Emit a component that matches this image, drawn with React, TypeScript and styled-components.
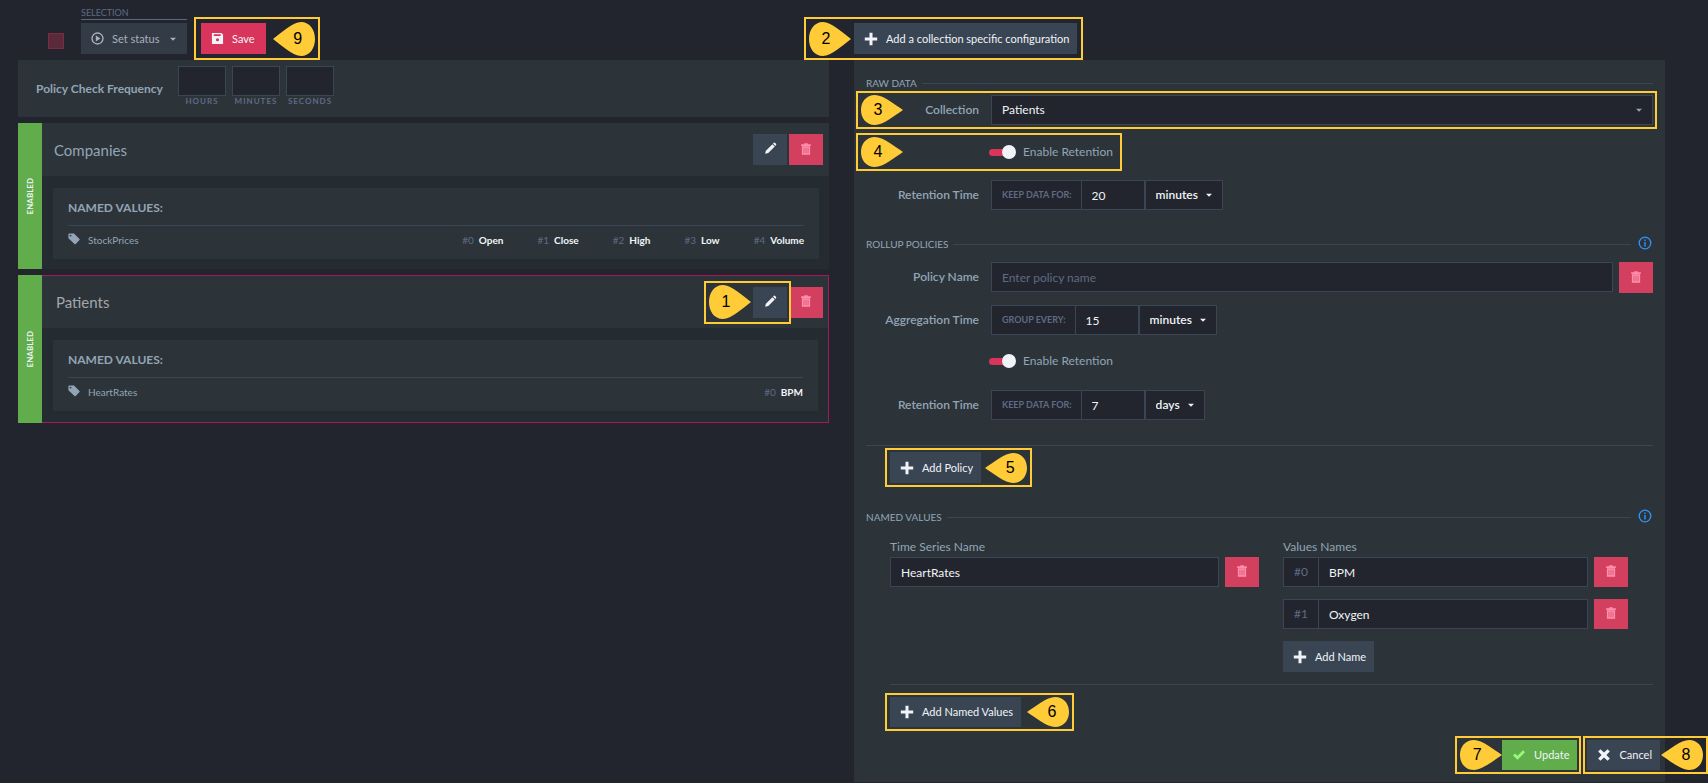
import React, { useId } from "react";
import styled, { createGlobalStyle, css } from "styled-components";

const c = {
  page: "#22252d",
  panel: "#2c343a",
  body: "#242b31",
  line: "#3a4653",
  button: "#3a4553",
  text: "#93a4b5",
  muted: "#5f6b84",
  white: "#f0f4f8",
  red: "#d9345b",
  redSoft: "#d3405f",
  green: "#61ad4b",
  accent: "#a5195a",
  yellow: "#ffcb37",
  info: "#2f93ff",
};

const GlobalStyle = createGlobalStyle`
  *, *::before, *::after { box-sizing: border-box; }
  body {
    margin: 0;
    background: ${c.page};
    color: ${c.text};
    font-family: Lato, "Liberation Sans", sans-serif;
    font-size: 12px;
    line-height: 16px;
    overflow-x: hidden;
  }
  button, input, select { font: inherit; margin: 0; border-radius: 0; }
`;

const Page = styled.main`
  display: grid;
  grid-template-columns: minmax(0, 1fr) minmax(0, 1fr);
  column-gap: 25px;
  padding: 0 43px 2px 18px;
`;

const Column = styled.section`
  display: flex;
  flex-direction: column;
`;

const Toolbar = styled.header`
  display: flex;
  align-items: flex-end;
  height: 60px;
  padding-bottom: 6px;
`;

const SelectionTools = styled(Toolbar)`
  padding-left: 30px;
`;

const Callout = styled.div<{ $wide?: boolean }>`
  position: relative;
  flex: ${(p) => (p.$wide ? "1" : "none")};
  display: flex;
  align-items: center;
`;

const Frame = styled.div<{ $gap: number; $left: number; $right: number }>`
  position: absolute;
  z-index: 2;
  top: ${(p) => -p.$gap}px;
  bottom: ${(p) => -p.$gap}px;
  left: ${(p) => -p.$left}px;
  right: ${(p) => -p.$right}px;
  border: 2px solid ${c.yellow};
  pointer-events: none;
`;

const MarkerBox = styled.div<{ $side: "left" | "right"; $tall: boolean }>`
  position: absolute;
  top: 50%;
  ${(p) => p.$side}: 3px;
  width: 42px;
  height: ${(p) => (p.$tall ? 34 : 30)}px;
  transform: translateY(-50%);
  display: grid;
  place-items: center;
  padding-${(p) => (p.$side === "left" ? "right" : "left")}: 8px;
  color: #000;
  font: 16px/20px "Liberation Sans", Arial, sans-serif;

  svg {
    position: absolute;
    inset: 0;
    width: 100%;
    height: 100%;
  }
  span { position: relative; }
`;

function Annotation(props: {
  n: number;
  side: "left" | "right";
  tall?: boolean;
  left: number;
  right: number;
}) {
  const { n, side, tall = false, left, right } = props;
  const shape =
    side === "left"
      ? "M42 17C34 11 22 0 14 0C5 0 0 8 0 17S5 34 14 34C22 34 34 23 42 17Z"
      : "M0 17C8 11 20 0 28 0C37 0 42 8 42 17S37 34 28 34C20 34 8 23 0 17Z";
  return (
    <Frame $gap={tall ? 6 : 4} $left={left} $right={right}>
      <MarkerBox $side={side} $tall={tall}>
        <svg viewBox="0 0 42 34" preserveAspectRatio="none" aria-hidden="true">
          <path d={shape} fill={c.yellow} />
        </svg>
        <span>{n}</span>
      </MarkerBox>
    </Frame>
  );
}

const SelectAll = styled.input`
  appearance: none;
  width: 16px;
  height: 16px;
  margin: 0 17px 5px 0;
  border: 1px solid #7c2b42;
  background: #592b3a;
`;

const StatusGroup = styled.div`
  width: 106px;
  margin-right: 14px;
`;

const GroupLabel = styled.div`
  margin-bottom: 3px;
  border-bottom: 1px solid #5b677c;
  color: ${c.muted};
  font-size: 9px;
  line-height: 12px;
`;

const tones = {
  plain: css`background: ${c.button}; color: ${c.white};`,
  dim: css`background: #333b47; color: #a9b0b9;`,
  save: css`background: ${c.red}; color: ${c.white};`,
  danger: css`background: ${c.redSoft}; color: #ff8fac;`,
  success: css`background: ${c.green}; color: ${c.white}; svg { color: #9af582; }`,
};

const Button = styled.button<{ $tone?: keyof typeof tones; $low?: boolean }>`
  display: inline-flex;
  align-items: center;
  height: ${(p) => (p.$low ? 30 : 31)}px;
  padding: 0 8px 0 10px;
  border: 0;
  font-size: 11px;
  white-space: nowrap;
  cursor: pointer;
  ${(p) => tones[p.$tone ?? "plain"]}

  > svg:first-child { margin-right: 8px; }
`;

const SaveButton = styled(Button)`
  padding-right: 11px;
`;

const StatusButton = styled(Button)`
  width: 100%;
  > svg:last-child { margin-left: auto; }
`;

const IconButton = styled(Button)`
  flex: none;
  width: 34px;
  padding: 0 0 2px;
  justify-content: center;
  > svg:first-child { margin-right: 0; }
`;

type IconName = "play" | "caret" | "save" | "pencil" | "trash" | "plus" | "tag" | "info" | "check" | "close";

const glyphs: Record<IconName, React.ReactNode> = {
  play: (
    <>
      <circle cx="7" cy="7" r="5.9" fill="none" stroke="currentColor" strokeWidth="1.5" />
      <path d="M5.2 3.8L10.2 7L5.2 10.2Z" />
    </>
  ),
  caret: <path d="M3.5 5.5H10.5L7 9Z" />,
  save: (
    <path
      fillRule="evenodd"
      d="M1 1H11.2L13 2.8V13H1ZM3 2.3V4.3H10.4V2.3ZM7 6.6A1.7 1.7 0 1 0 7 10A1.7 1.7 0 1 0 7 6.6Z"
    />
  ),
  pencil: <path d="M9.7 1.7L10.6.9Q11.3.3 12 1L12.9 1.9Q13.6 2.6 13 3.3L12.2 4.2ZM9.1 2.3L11.6 4.8L4.6 11.8L1.2 12.7L2 9.4Z" />,
  trash: (
    <path
      fillRule="evenodd"
      d="M5 .4H9V1.6H12.6V3.4H1.4V1.6H5ZM2.2 3.9H11.8V13.6H2.2ZM4.2 5.4V12H5V5.4ZM6.6 5.4V12H7.4V5.4ZM9 5.4V12H9.8V5.4Z"
    />
  ),
  plus: <path d="M5.5.8H8.5V5.5H13.2V8.5H8.5V13.2H5.5V8.5H.8V5.5H5.5Z" />,
  tag: (
    <path
      fillRule="evenodd"
      d="M.5 1.5Q.5.5 1.5.5H7L13.4 6.9Q14 7.5 13.4 8.3L9 12.9Q8.3 13.5 7.5 12.9L.5 6ZM3 2A1 1 0 1 0 3 4A1 1 0 1 0 3 2Z"
    />
  ),
  info: (
    <>
      <circle cx="7" cy="7" r="5.8" fill="none" stroke="currentColor" strokeWidth="1.3" />
      <path d="M6.3 3.6H7.7V5H6.3ZM6.3 6H7.7V10.4H6.3Z" />
    </>
  ),
  check: <path d="M1 7.6L3 5.4L5.5 7.8L11 2.2L13 4.2L5.5 11.8Z" />,
  close: <path d="M1.2 3.4L3.4 1.2L7 4.6L10.6 1.2L12.8 3.4L9.4 7L12.8 10.6L10.6 12.8L7 9.4L3.4 12.8L1.2 10.6L4.6 7Z" />,
};

function Icon({ name, size = 14 }: { name: IconName; size?: number }) {
  return (
    <svg width={size} height={size} viewBox="0 0 14 14" fill="currentColor" aria-hidden="true">
      {glyphs[name]}
    </svg>
  );
}

const FrequencyPanel = styled.div`
  display: flex;
  align-items: flex-start;
  gap: 6px;
  height: 57px;
  margin-bottom: 6px;
  padding: 6px 18px;
  background: ${c.panel};
`;

const FrequencyTitle = styled.h2`
  width: 136px;
  margin: 14px 0 0;
  font-size: 12px;
  line-height: 18px;
  font-weight: 700;
  white-space: nowrap;
`;

const field = css`
  height: 30px;
  border: 1px solid ${c.line};
  background: ${c.page};
  color: ${c.white};
  outline: 0;
`;

const UnitLabel = styled.label`
  display: flex;
  flex-direction: column;
  align-items: center;
  color: ${c.muted};
  font-size: 8px;
  line-height: 10px;
  font-weight: 700;
  letter-spacing: 1px;

  input {
    ${field}
    width: 48px;
  }
`;

const Card = styled.article`
  display: flex;
  margin-bottom: 6px;
  background: ${c.body};
`;

const Status = styled.div`
  flex: none;
  display: flex;
  align-items: center;
  justify-content: center;
  width: 24px;
  background: ${c.green};
  color: ${c.white};
  font-size: 8px;
  line-height: 12px;
  font-weight: 700;

  span {
    writing-mode: vertical-rl;
    transform: rotate(180deg);
  }
`;

const CardMain = styled.div<{ $active?: boolean }>`
  flex: 1;
  min-width: 0;
  border: ${(p) => (p.$active ? `1px solid ${c.accent}` : "0")};
  border-left: 0;
  padding-bottom: ${(p) => (p.$active ? 1 : 0)}px;
`;

const CardHeader = styled.div<{ $active?: boolean }>`
  display: flex;
  align-items: center;
  gap: 2px;
  height: ${(p) => (p.$active ? 52 : 53)}px;
  padding: 0 ${(p) => (p.$active ? 5 : 6)}px 0 ${(p) => (p.$active ? 14 : 12)}px;
  background: ${c.panel};
`;

const CardTitle = styled.h3<{ $active?: boolean }>`
  flex: 1;
  margin: 0;
  color: ${(p) => (p.$active ? "#a3a6aa" : c.text)};
  font-size: 15px;
  line-height: 20px;
  font-weight: 400;
`;

const NamedBox = styled.div`
  margin: 12px 10px 10px 11px;
  padding: 10px 15px 10px;
  background: ${c.panel};
`;

const NamedTitle = styled.h4`
  margin: 0;
  padding-bottom: 7px;
  border-bottom: 1px solid ${c.line};
  font-size: 12px;
  line-height: 20px;
  font-weight: 700;
`;

const NamedRow = styled.div`
  display: flex;
  align-items: center;
  height: 23px;
  padding-top: 5px;
  font-size: 10px;
  line-height: 16px;

  > svg { margin: 0 8px 2px 0; }
`;

const SeriesValues = styled.ul`
  display: flex;
  gap: 34px;
  margin: 0 0 0 auto;
  padding: 0;
  list-style: none;
  color: ${c.white};
  font-weight: 700;

  span {
    margin-right: 5px;
    color: ${c.muted};
    font-weight: 400;
  }
`;

function SeriesCard(props: { title: string; series: string; values: string[]; active?: boolean }) {
  const { title, series, values, active } = props;
  const edit = (
    <IconButton type="button" aria-label={`Edit ${title}`}>
      <Icon name="pencil" size={13} />
    </IconButton>
  );
  return (
    <Card>
      <Status><span>ENABLED</span></Status>
      <CardMain $active={active}>
        <CardHeader $active={active}>
          <CardTitle $active={active}>{title}</CardTitle>
          {active ? (
            <Callout>
              {edit}
              <Annotation n={1} side="left" tall left={49} right={4} />
            </Callout>
          ) : edit}
          <IconButton type="button" $tone="danger" aria-label={`Delete ${title}`}>
            <Icon name="trash" size={12} />
          </IconButton>
        </CardHeader>
        <NamedBox>
          <NamedTitle>NAMED VALUES:</NamedTitle>
          <NamedRow>
            <Icon name="tag" size={12} />
            {series}
            <SeriesValues>
              {values.map((v, i) => (
                <li key={v}><span>#{i}</span>{v}</li>
              ))}
            </SeriesValues>
          </NamedRow>
        </NamedBox>
      </CardMain>
    </Card>
  );
}

const Editor = styled.form`
  display: flex;
  flex-direction: column;
  padding: 14px 12px 12px;
  background: ${c.panel};
`;

const Legend = styled.h2<{ $spaced?: boolean }>`
  display: flex;
  align-items: center;
  gap: 5px;
  height: 18px;
  margin: ${(p) => (p.$spaced ? 25 : 0)}px 0 0;
  font-size: 10px;
  line-height: 18px;
  font-weight: 400;

  &::after {
    content: "";
    flex: 1;
    order: 1;
    height: 1px;
    background: ${c.line};
  }
  svg {
    order: 2;
    margin: 0 1px 3px 2px;
    color: ${c.info};
  }
`;

const FormRow = styled.div<{ $top?: number }>`
  display: flex;
  align-items: flex-start;
  height: 30px;
  margin-top: ${(p) => p.$top ?? 12}px;
`;

const RowLabel = styled.label`
  flex: none;
  width: 125px;
  padding-right: 12px;
  text-align: right;
  line-height: 30px;
  font-weight: 600;
`;

const TextInput = styled.input`
  ${field}
  flex: 1;
  min-width: 0;
  padding: 0 10px;

  &::placeholder { color: ${c.muted}; opacity: 1; }
`;

const SelectBox = styled.div<{ $wide?: boolean }>`
  position: relative;
  flex: ${(p) => (p.$wide ? "1" : "none")};
  display: flex;

  select {
    ${field}
    appearance: none;
    width: 100%;
    padding: 0 ${(p) => (p.$wide ? 24 : 23)}px 0 10px;
    font-weight: ${(p) => (p.$wide ? 400 : 600)};
  }
  svg {
    position: absolute;
    top: 9px;
    right: 8px;
    color: ${(p) => (p.$wide ? c.text : c.white)};
    pointer-events: none;
  }
`;

const Prefix = styled.span`
  ${field}
  flex: none;
  display: flex;
  align-items: center;
  margin-right: -1px;
  padding: 0 10px;
  color: ${c.muted};
`;

const CapsPrefix = styled(Prefix)`
  padding-right: 9px;
  font-size: 9px;
  font-weight: 700;
`;

const AmountInput = styled(TextInput)`
  flex: none;
  width: 64px;
`;

const TrashButton = styled(IconButton)`
  margin-left: 6px;
`;

function TimeRow(props: { label: string; prefix: string; value: string; unit: string; top: number }) {
  const id = useId();
  return (
    <FormRow $top={props.top}>
      <RowLabel htmlFor={id}>{props.label}</RowLabel>
      <CapsPrefix>{props.prefix}</CapsPrefix>
      <AmountInput id={id} defaultValue={props.value} />
      <SelectBox>
        <select aria-label={`${props.label} unit`} defaultValue={props.unit}>
          <option>{props.unit}</option>
        </select>
        <Icon name="caret" size={12} />
      </SelectBox>
    </FormRow>
  );
}

const ToggleLabel = styled.label`
  display: flex;
  align-items: center;
  gap: 7px;
  height: 30px;
  margin-left: 123px;

  input {
    appearance: none;
    position: relative;
    width: 27px;
    height: 14px;
  }
  input::before {
    content: "";
    position: absolute;
    top: 4px;
    left: 0;
    width: 22px;
    height: 7px;
    border-radius: 4px;
    background: ${c.red};
  }
  input::after {
    content: "";
    position: absolute;
    top: 0;
    right: 0;
    width: 14px;
    height: 14px;
    border-radius: 50%;
    background: ${c.white};
  }
`;

const Rule = styled.hr<{ $top?: number; $bottom: number }>`
  height: 1px;
  margin: ${(p) => p.$top ?? 0}px 0 ${(p) => p.$bottom}px;
  border: 0;
  background: ${c.line};
`;

const ActionRow = styled.div`
  display: flex;
  padding-left: 24px;
`;

const Indented = styled.div`
  padding-left: 24px;
`;

const NamedGrid = styled.div`
  display: grid;
  grid-template-columns: minmax(0, 369fr) minmax(0, 345fr);
  gap: 24px;
  padding: 11px 25px 12px 0;
`;

const Field = styled.div`
  display: flex;
  flex-direction: column;
  align-items: flex-start;
`;

const FieldLabel = styled.label`
  height: 20px;
  line-height: 20px;
`;

const FieldLine = styled.div`
  display: flex;
  width: 100%;
  margin-bottom: 12px;
`;

const FormActions = styled.div`
  display: flex;
  justify-content: flex-end;
  gap: 10px;
  margin: 13px -7px 0 0;
`;

export default function App() {
  return (
    <>
      <GlobalStyle />
      <Page>
        <Column>
          <SelectionTools>
            <SelectAll type="checkbox" aria-label="Select all" />
            <StatusGroup>
              <GroupLabel>SELECTION</GroupLabel>
              <StatusButton type="button" $tone="dim">
                <Icon name="play" size={13} />Set status<Icon name="caret" size={12} />
              </StatusButton>
            </StatusGroup>
            <Callout>
              <SaveButton type="button" $tone="save"><Icon name="save" size={13} />Save</SaveButton>
              <Annotation n={9} side="right" tall left={7} right={54} />
            </Callout>
          </SelectionTools>
          <FrequencyPanel>
            <FrequencyTitle>Policy Check Frequency</FrequencyTitle>
            <UnitLabel><input />HOURS</UnitLabel>
            <UnitLabel><input />MINUTES</UnitLabel>
            <UnitLabel><input />SECONDS</UnitLabel>
          </FrequencyPanel>
          <SeriesCard title="Companies" series="StockPrices" values={["Open", "Close", "High", "Low", "Volume"]} />
          <SeriesCard title="Patients" series="HeartRates" values={["BPM"]} active />
        </Column>

        <Column>
          <Toolbar>
            <Callout>
              <Button type="button"><Icon name="plus" />Add a collection specific configuration</Button>
              <Annotation n={2} side="left" tall left={50} right={6} />
            </Callout>
          </Toolbar>
          <Editor>
            <Legend>RAW DATA</Legend>
            <FormRow $top={3}>
              <Callout $wide>
                <RowLabel htmlFor="collection">Collection</RowLabel>
                <SelectBox $wide>
                  <select id="collection" defaultValue="Patients"><option>Patients</option></select>
                  <Icon name="caret" size={12} />
                </SelectBox>
                <Annotation n={3} side="left" left={10} right={4} />
              </Callout>
            </FormRow>
            <FormRow>
              <Callout>
                <ToggleLabel><input type="checkbox" defaultChecked />Enable Retention</ToggleLabel>
                <Annotation n={4} side="left" left={10} right={9} />
              </Callout>
            </FormRow>
            <TimeRow label="Retention Time" prefix="KEEP DATA FOR:" value="20" unit="minutes" top={13} />

            <Legend $spaced>ROLLUP POLICIES<Icon name="info" /></Legend>
            <FormRow $top={9}>
              <RowLabel htmlFor="policy">Policy Name</RowLabel>
              <TextInput id="policy" placeholder="Enter policy name" />
              <TrashButton type="button" $tone="danger" aria-label="Delete policy"><Icon name="trash" size={12} /></TrashButton>
            </FormRow>
            <TimeRow label="Aggregation Time" prefix="GROUP EVERY:" value="15" unit="minutes" top={13} />
            <FormRow $top={11}>
              <ToggleLabel><input type="checkbox" defaultChecked />Enable Retention</ToggleLabel>
            </FormRow>
            <TimeRow label="Retention Time" prefix="KEEP DATA FOR:" value="7" unit="days" top={14} />
            <Rule $top={25} $bottom={6} />
            <ActionRow>
              <Callout>
                <Button type="button"><Icon name="plus" />Add Policy</Button>
                <Annotation n={5} side="right" left={5} right={51} />
              </Callout>
            </ActionRow>

            <Legend $spaced>NAMED VALUES<Icon name="info" /></Legend>
            <Indented>
              <NamedGrid>
                <Field>
                  <FieldLabel htmlFor="series">Time Series Name</FieldLabel>
                  <FieldLine>
                    <TextInput id="series" defaultValue="HeartRates" />
                    <TrashButton type="button" $low $tone="danger" aria-label="Delete time series"><Icon name="trash" size={12} /></TrashButton>
                  </FieldLine>
                </Field>
                <Field>
                  <FieldLabel htmlFor="value-0">Values Names</FieldLabel>
                  {["BPM", "Oxygen"].map((name, i) => (
                    <FieldLine key={name}>
                      <Prefix>#{i}</Prefix>
                      <TextInput id={`value-${i}`} aria-label={`Value name ${i}`} defaultValue={name} />
                      <TrashButton type="button" $low $tone="danger" aria-label={`Delete ${name}`}><Icon name="trash" size={12} /></TrashButton>
                    </FieldLine>
                  ))}
                  <Button type="button"><Icon name="plus" />Add Name</Button>
                </Field>
              </NamedGrid>
              <Rule $bottom={12} />
            </Indented>
            <ActionRow>
              <Callout>
                <Button type="button" $low><Icon name="plus" />Add Named Values</Button>
                <Annotation n={6} side="right" left={5} right={53} />
              </Callout>
            </ActionRow>
            <FormActions>
              <Callout>
                <Button type="button" $low $tone="success"><Icon name="check" />Update</Button>
                <Annotation n={7} side="left" left={47} right={4} />
              </Callout>
              <Callout>
                <Button type="button" $low><Icon name="close" />Cancel</Button>
                <Annotation n={8} side="right" left={4} right={48} />
              </Callout>
            </FormActions>
          </Editor>
        </Column>
      </Page>
    </>
  );
}
